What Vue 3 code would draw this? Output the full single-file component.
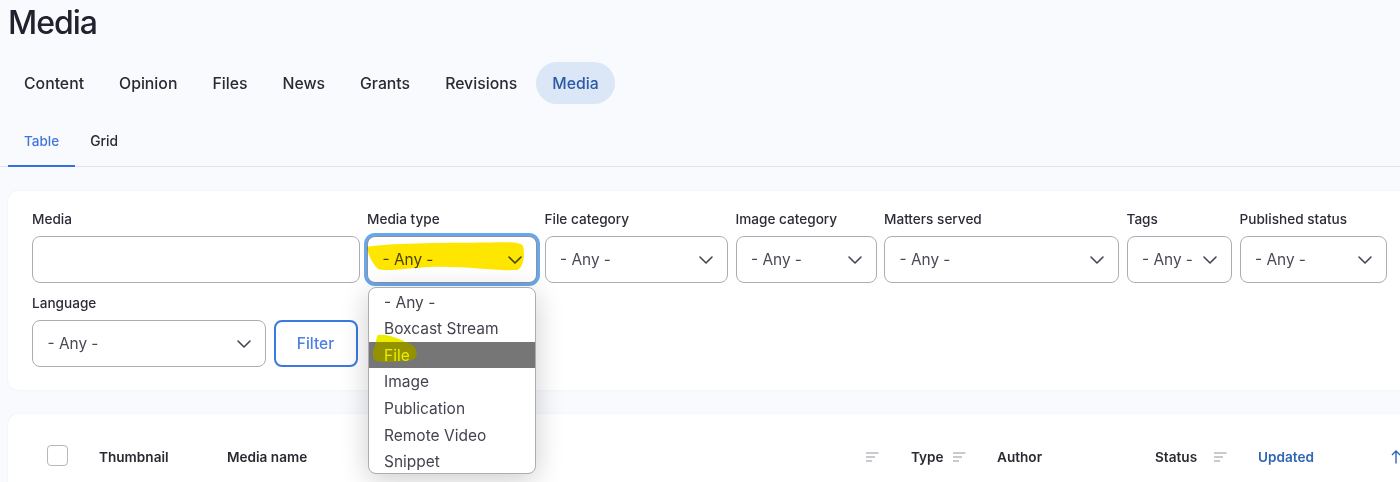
<script setup>
const tabs = ['Content', 'Opinion', 'Files', 'News', 'Grants', 'Revisions', 'Media']
const fields = [
  { label: 'Media', width: 327.5, input: true },
  { label: 'Media type', width: 170, focus: true },
  { label: 'File category', width: 183.5 },
  { label: 'Image category', width: 141 },
  { label: 'Matters served', width: 235 },
  { label: 'Tags', width: 105.5 },
  { label: 'Published status', width: 147 },
  { label: 'Language', width: 234 }
]
const options = ['- Any -', 'Boxcast Stream', 'File', 'Image', 'Publication', 'Remote Video', 'Snippet']
const fileMark = 'M378 335C386 334 398 338 405 342C413 344 417 348 416.5 355C415 360 410 361 402 361C392 362 380 363 374.5 360C372 356 372.5 350 375 346C376 342 376 338 378 335Z'
</script>

<template>
  <div class="page">
    <h1 class="title">Media</h1>
    <nav class="pills">
      <a v-for="t in tabs" :key="t" class="pill" :class="{ active: t === 'Media' }">{{ t }}</a>
    </nav>
    <div class="subtabs">
      <a class="subtab on">Table</a>
      <a class="subtab grid">Grid</a>
    </div>

    <section class="card filters">
      <div v-for="f in fields" :key="f.label" class="field" :style="{ width: f.width + 'px' }">
        <label class="label">{{ f.label }}</label>
        <div v-if="f.input" class="control"></div>
        <div v-else class="control select" :class="{ focus: f.focus }">
          <span>- Any -</span>
          <svg class="chev" width="16" height="10" viewBox="0 0 16 10"><path d="M2 2l6 6 6-6" fill="none" stroke="#454552" stroke-width="1.6" stroke-linecap="round" stroke-linejoin="round"/></svg>
        </div>
      </div>
      <button class="filter-btn">Filter</button>
    </section>

    <section class="card table-head">
      <span class="check"></span>
      <span class="th thumb">Thumbnail</span>
      <span class="th name">Media name</span>
      <svg class="sort s-name" width="13" height="10" viewBox="0 0 13 10"><path d="M0 1h12.5M0 5h9M0 9h6" stroke="#b9b9bf" stroke-width="1.4"/></svg>
      <span class="th type">Type</span>
      <svg class="sort s-type" width="13" height="10" viewBox="0 0 13 10"><path d="M0 1h12.5M0 5h9M0 9h6" stroke="#b9b9bf" stroke-width="1.4"/></svg>
      <span class="th author">Author</span>
      <span class="th status">Status</span>
      <svg class="sort s-status" width="13" height="10" viewBox="0 0 13 10"><path d="M0 1h12.5M0 5h9M0 9h6" stroke="#b9b9bf" stroke-width="1.4"/></svg>
      <span class="th updated">Updated</span>
      <svg class="arrow" width="10" height="14" viewBox="0 0 10 14"><path d="M5 13.5V1M1 5l4-4 4 4" fill="none" stroke="#2f66b5" stroke-width="1.4"/></svg>
    </section>

    <ul class="menu">
      <li v-for="o in options" :key="o" class="opt" :class="{ hot: o === 'File' }">{{ o }}</li>
    </ul>

    <svg class="overlay" width="1400" height="482" viewBox="0 0 1400 482">
      <path :d="fileMark" fill="#fff" fill-opacity="0.3"/>
    </svg>
    <svg class="overlay marker" width="1400" height="482" viewBox="0 0 1400 482">
      <path d="M367 247C385 243 440 243 490 242.5C508 242 521 242 523 246C525 254 524 268 517 270C490 271 470 266 430 267C410 268 385 272 378 269C372 263 368 255 367 247Z" fill="#ffe600"/>
      <path :d="fileMark" fill="#ecec00"/>
    </svg>
  </div>
</template>

<style>
html, body { margin: 0; background: #f9fafe; overflow: hidden; }
</style>

<style scoped>
.page {
  position: relative;
  width: 1400px;
  height: 482px;
  overflow: hidden;
  background: #f9fafe;
  color: #24242e;
  font-family: Inter, "Liberation Sans", sans-serif;
}
.title {
  margin: 0;
  padding-left: 8px;
  height: 44px;
  font-size: 32px;
  line-height: 45px;
  font-weight: 500;
  letter-spacing: -1px;
  color: #22222e;
}
.pills {
  display: flex;
  gap: 3px;
  margin-top: 18px;
  padding-left: 8px;
}
.pill {
  height: 42px;
  line-height: 43px;
  padding: 0 16px;
  border-radius: 21px;
  font-size: 15.8px;
  font-weight: 500;
  color: #2a2a33;
}
.pill.active { background: #dbe6f7; color: #2c5aa4; }
.subtabs {
  display: flex;
  margin-top: 16px;
  margin-bottom: 24px;
  border-bottom: 1px solid #e3e4ea;
  padding-left: 8px;
  height: 46px;
}
.subtab {
  padding: 0 16px;
  font-size: 13.5px;
  line-height: 43px;
  font-weight: 500;
  color: #2a2a33;
  margin-bottom: -1px;
}
.subtab.on { color: #3f76dc; border-bottom: 2px solid #2f72e0; }
.subtab.grid { margin-left: -1px; font-size: 13.8px; }
.card {
  width: 1420px;
  margin-left: 8px;
  box-sizing: border-box;
  background: #fff;
  border-radius: 10px;
  box-shadow: 0 0 2px rgba(40, 50, 90, 0.08);
}
.filters {
  display: flex;
  flex-wrap: wrap;
  align-content: flex-start;
  column-gap: 7.5px;
  row-gap: 11px;
  padding: 19px 24px 0;
  height: 199px;
}
.field { display: flex; flex-direction: column; flex: none; }
.label {
  font-size: 13.6px;
  line-height: 18px;
  font-weight: 500;
  color: #2c2c38;
  margin-bottom: 8px;
}
.control {
  box-sizing: border-box;
  height: 47px;
  background: #fff;
  border: 1px solid #adacb5;
  border-radius: 8px;
}
.select {
  display: flex;
  align-items: center;
  justify-content: space-between;
  padding: 0 13px 0 14.5px;
  font-size: 15.4px;
  color: #4a4a56;
}
.select.focus {
  border-color: #8f8f98;
  box-shadow: 0 0 0 3px #66a8ee;
}
.chev { flex: none; }
.filter-btn {
  box-sizing: border-box;
  width: 84px;
  height: 47px;
  margin-top: 26px;
  background: #fff;
  border: 2px solid #3b78e0;
  border-radius: 8px;
  color: #4d7fe0;
  font: 500 15.5px Inter, "Liberation Sans", sans-serif;
}
.table-head {
  position: relative;
  margin-top: 24px;
  height: 120px;
}
.check {
  position: absolute;
  left: 39px;
  top: 31px;
  width: 21px;
  height: 21px;
  box-sizing: border-box;
  border: 1px solid #b6b6be;
  border-radius: 4px;
}
.th {
  position: absolute;
  top: 34px;
  font-size: 13.6px;
  line-height: 18px;
  font-weight: 600;
  color: #2a2a33;
}
.thumb { left: 91px; }
.name { left: 219px; }
.type { left: 903px; }
.author { left: 989px; }
.status { left: 1147px; }
.updated { left: 1250px; color: #2f66b5; }
.sort { position: absolute; top: 38px; }
.s-name { left: 858px; }
.s-type { left: 945px; }
.s-status { left: 1206px; }
.arrow { position: absolute; left: 1383px; top: 36px; }
.menu {
  position: absolute;
  left: 368px;
  top: 287px;
  box-sizing: border-box;
  width: 168px;
  height: 187px;
  margin: 0;
  padding: 0.5px 0 0;
  list-style: none;
  background: #fff;
  border: 1px solid #adadad;
  border-radius: 8px;
  overflow: hidden;
  box-shadow: 0 6px 28px rgba(0, 0, 0, 0.2);
}
.opt {
  height: 26.65px;
  line-height: 27.2px;
  padding-left: 15px;
  font-size: 15.5px;
  color: #444450;
}
.opt.hot { background: #767676; color: #fff; }
.overlay {
  position: absolute;
  left: 0;
  top: 0;
  pointer-events: none;
}
.marker { mix-blend-mode: multiply; }
</style>
